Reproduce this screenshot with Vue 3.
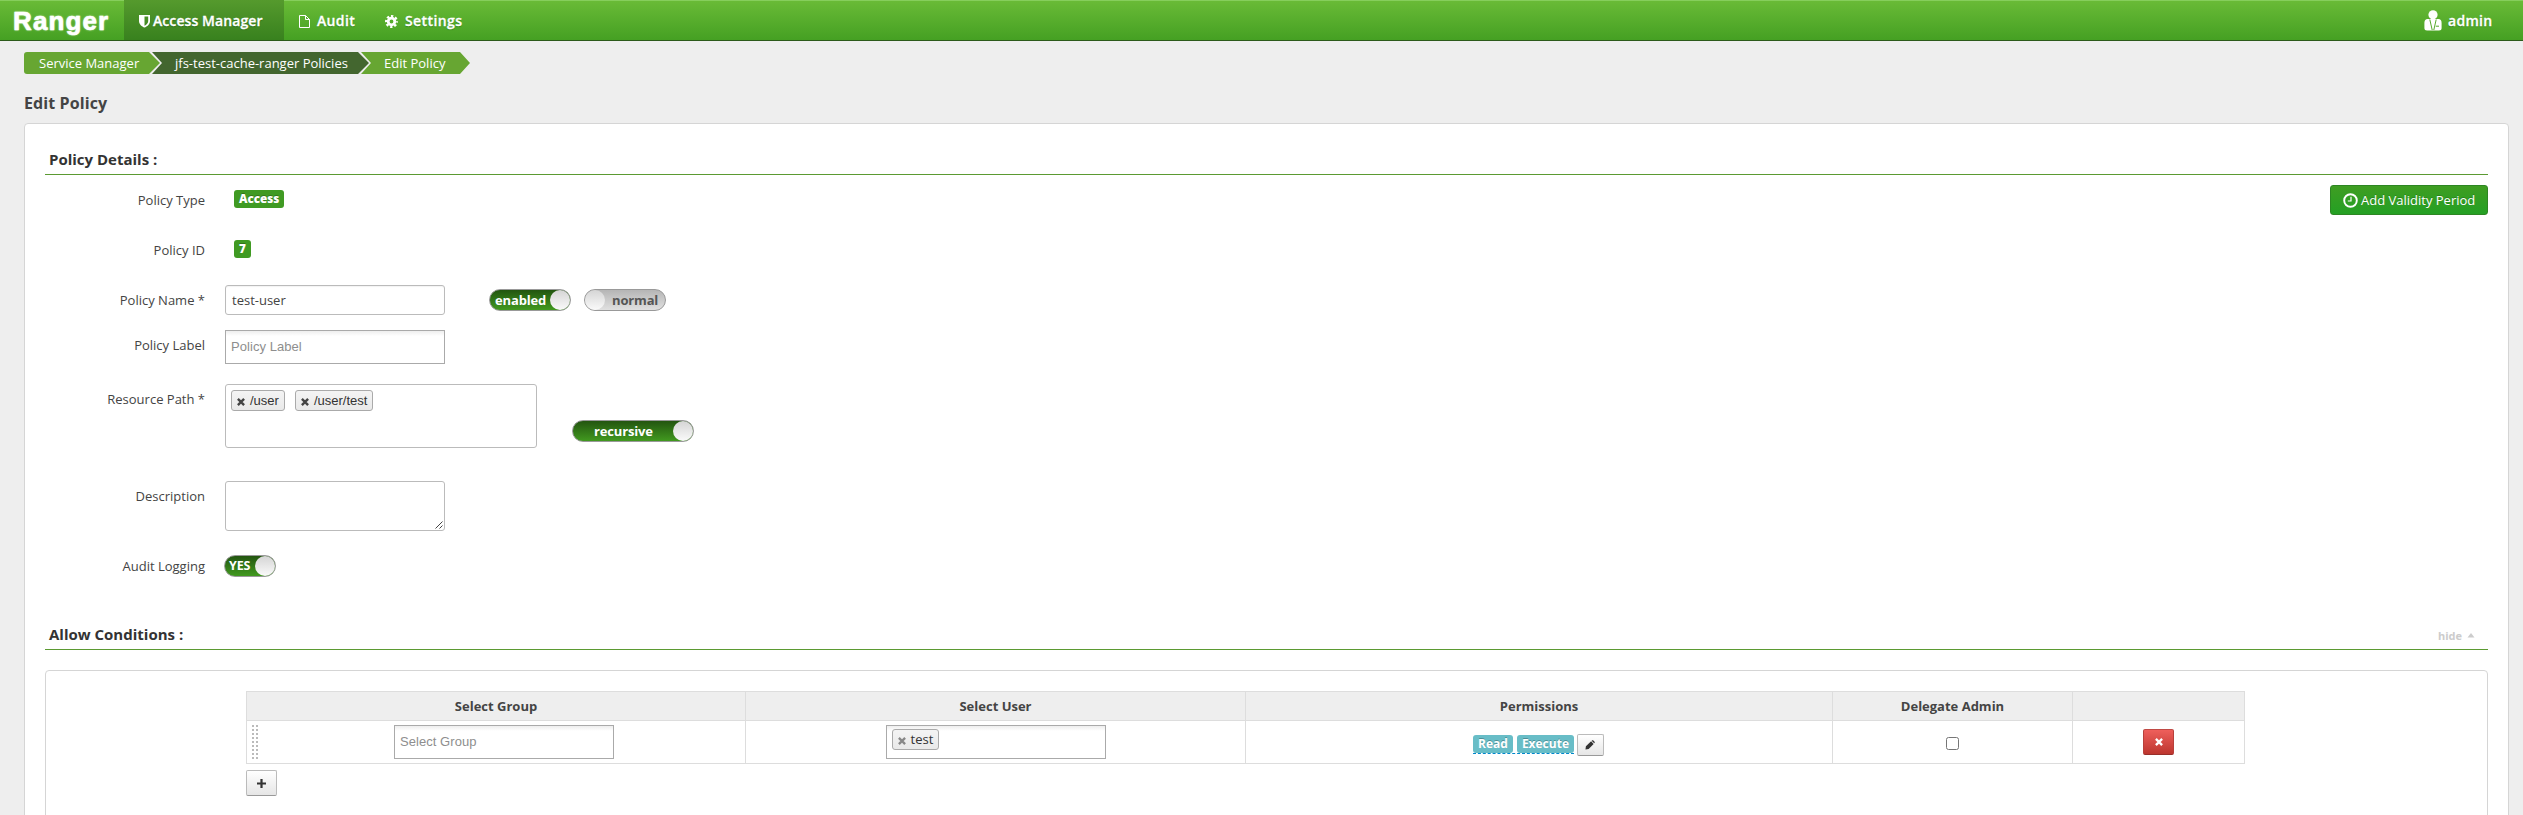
<script setup>
const nav = [
  { name: 'Access Manager', icon: 'shield', cls: 'access' },
  { name: 'Audit', icon: 'file', cls: 'audit' },
  { name: 'Settings', icon: 'cog', cls: 'settings' },
]
const permissions = ['Read', 'Execute']
const paths = ['/user', '/user/test']
</script>

<template>
  <div class="page">
    <header class="nav">
      <div class="logo">Ranger</div>
      <a v-for="n in nav" :key="n.name" class="tab" :class="n.cls">
        <svg v-if="n.icon === 'shield'" class="i-shield" viewBox="0 0 11 14"><path fill="#fff" fill-rule="evenodd" d="M0 1H11V7C11 10.5 8 12.5 5.5 13.6C3 12.5 0 10.5 0 7ZM5.5 2.6V11.8C7.5 10.7 9.2 9.3 9.2 7V2.600Z" /></svg>
        <svg v-else-if="n.icon === 'file'" class="i-file" viewBox="0 0 11 13"><path fill="none" stroke="#fff" d="M.5.5H6.500L10.500 4.500V12.500H.5ZM6.500.5V4.500H10.500" /></svg>
        <svg v-else class="i-cog" viewBox="0 0 13 13"><circle cx="6.500" cy="6.500" r="3.300" fill="none" stroke="#fff" stroke-width="2.800" /><circle cx="6.500" cy="6.500" r="5.300" fill="none" stroke="#fff" stroke-width="2.400" stroke-dasharray="2.300 1.862" stroke-dashoffset="1.150" /></svg>
        <span>{{ n.name }}</span>
      </a>
      <div class="user">
        <svg viewBox="0 0 18 21"><circle cx="9" cy="4.800" r="4.600" fill="#fff" /><path fill="#fff" d="M3 9H15Q17.600 9.500 17.600 13V18Q17.600 20.500 15 20.500H3Q.4 20.500.4 18V13Q.4 9.500 3 9Z" /><path fill="none" stroke="#55a92b" stroke-width="1" d="M5.800 9.500L8.200 20M12.200 9.500L9.800 20M11.800 16.200H15" /></svg>
        <span>admin</span>
      </div>
    </header>

    <nav class="crumbs">
      <a class="c1">Service Manager</a>
      <a class="c2">jfs-test-cache-ranger Policies</a>
      <a class="c3">Edit Policy</a>
    </nav>
    <h3 class="title">Edit Policy</h3>

    <main class="panel">
      <div class="legend first"><span>Policy Details :</span></div>
      <div class="details">
        <form class="form">
          <div class="row r-type"><label>Policy Type</label><span class="badge">Access</span></div>
          <div class="row r-id"><label>Policy ID</label><span class="badge">7</span></div>
          <div class="row r-name">
            <label>Policy Name *</label>
            <div class="input round">test-user</div>
            <div class="toggle on t-enabled"><span>enabled</span><i></i></div>
            <div class="toggle off t-normal"><i></i><span>normal</span></div>
          </div>
          <div class="row r-label"><label>Policy Label</label><div class="input square">Policy Label</div></div>
          <div class="row r-path">
            <label>Resource Path *</label>
            <div class="paths">
              <span v-for="p in paths" :key="p" class="chip">
                <svg viewBox="0 0 8 8"><path stroke="#444" stroke-width="2.400" d="M.9.9L7.100 7.100M7.100.9L.9 7.100" /></svg>{{ p }}
              </span>
            </div>
            <div class="toggle on t-rec"><span>recursive</span><i></i></div>
          </div>
          <div class="row r-desc">
            <label>Description</label>
            <div class="area"><svg viewBox="0 0 8 8"><path stroke="#444" stroke-width="1" d="M.5 7.500L7.500.5M4.500 7.500L7.500 4.500" /></svg></div>
          </div>
          <div class="row r-audit"><label>Audit Logging</label><div class="toggle on t-yes"><span>YES</span><i></i></div></div>
        </form>
        <button class="validity">
          <svg viewBox="0 0 15 15"><circle cx="7.500" cy="7.500" r="6.300" fill="none" stroke="#fff" stroke-width="1.900" /><path fill="none" stroke="#fff" stroke-width="1.200" d="M8 3.800V8H4.800" /></svg><span>Add Validity Period</span>
        </button>
      </div>

      <div class="legend second"><span>Allow Conditions :</span><a>hide<svg viewBox="0 0 8 5"><path fill="#ccc" d="M4 0L7.500 4.500H.5Z" /></svg></a></div>

      <section class="inner">
        <div class="grid">
          <div class="th">Select Group</div><div class="th">Select User</div><div class="th">Permissions</div><div class="th">Delegate Admin</div><div class="th"></div>
          <div class="td group"><i class="drag"></i><div class="input square">Select Group</div></div>
          <div class="td suser"><div class="input square"><span class="chip light"><svg viewBox="0 0 8 8"><path stroke="#888" stroke-width="2.300" d="M.9.9L7.100 7.100M7.100.9L.9 7.100" /></svg>test</span></div></div>
          <div class="td perms">
            <div class="plist"><span v-for="p in permissions" :key="p">{{ p }}</span></div>
            <button class="btn pencil"><svg viewBox="0 0 11 11"><path fill="#333" d="M.5 10.500L1 7L6.700 1.500L9.500 4.300L4 10ZM7.300.9L8 .4Q8.700 0 9.200.5L10.500 1.800Q11 2.300 10.600 2.900L10.100 3.700Z" /></svg></button>
          </div>
          <div class="td deleg"><i class="check"></i></div>
          <div class="td del"><button class="btn red"><svg viewBox="0 0 8 8"><path stroke="#fff" stroke-width="2.300" d="M.9.9L7.100 7.100M7.100.9L.9 7.100" /></svg></button></div>
        </div>
        <button class="btn plus"><svg viewBox="0 0 9 9"><path stroke="#333" stroke-width="2.200" d="M4.500 0V9M0 4.500H9" /></svg></button>
      </section>
    </main>
  </div>
</template>

<style>
body { margin: 0; background: #eee; overflow: hidden; }
</style>

<style scoped>
.page { width: 2523px; height: 815px; overflow: hidden; background: #eee; font: 13px/20px "Open Sans", sans-serif; color: #444; }
.page * { box-sizing: border-box; }
svg { display: block; flex: none; }
button { font: inherit; margin: 0; padding: 0; }

.nav { height: 41px; display: flex; border-bottom: 1px solid #2c5a1a; background: linear-gradient(#6abb37, #45a023); box-shadow: inset 0 1px #86ce5c; color: #fff; font-size: 14px; font-weight: 600; }
.logo { width: 124px; padding-left: 13px; font: bold 26px/42px "Liberation Sans", Arial, sans-serif; letter-spacing: 1.100px; -webkit-text-stroke: .5px #fff; text-shadow: 0 0 2px #e8ffe0; }
.tab { display: flex; align-items: center; height: 41px; padding-top: 1px; text-shadow: 0 1px 1px rgba(0, 60, 0, .35); -webkit-text-stroke: .3px #fff; }
.access { width: 160px; height: 40px; padding-left: 15px; background: linear-gradient(#559a2d, #38811e); }
.access span { letter-spacing: .08px; }
.audit { width: 86px; padding-left: 15px; }
.audit span { letter-spacing: .35px; }
.settings { padding-left: 15px; }
.settings span { letter-spacing: .4px; }
.i-shield { width: 11px; height: 14px; margin-right: 3px; }
.i-file { width: 11px; height: 13px; margin-right: 7px; }
.i-cog { width: 13px; height: 13px; margin-right: 7px; }
.user { margin-left: auto; width: 99px; display: flex; align-items: center; height: 41px; letter-spacing: .3px; text-shadow: 0 1px 1px rgba(0, 60, 0, .35); -webkit-text-stroke: .3px #fff; }
.user svg { width: 18px; height: 21px; margin-right: 6px; }

.crumbs { display: flex; margin: 11px 0 0 24px; height: 22px; color: #fff; line-height: 22px; }
.crumbs a { height: 22px; white-space: nowrap; }
.c1 { width: 136px; padding-left: 15px; background: #67a632; border-radius: 3px 0 0 3px; clip-path: polygon(0 0, 125px 0, 136px 11px, 125px 22px, 0 22px); }
.c2 { width: 217px; margin-left: -8px; padding-left: 23px; background: #43662f; clip-path: polygon(0 0, 206px 0, 217px 11px, 206px 22px, 0 22px, 10px 11px); }
.c3 { width: 109px; margin-left: -8px; padding-left: 23px; background: #67a632; clip-path: polygon(0 0, 99px 0, 109px 11px, 99px 22px, 0 22px, 10px 11px); }
.title { margin: 19px 0 0 24px; height: 30px; font-size: 16px; line-height: 20px; font-weight: 700; letter-spacing: .1px; }

.panel { margin: 0 14px 0 24px; height: 720px; background: #fff; border: 1px solid #d5d5d5; border-radius: 4px; padding: 24px 20px 0; }
.legend { display: flex; justify-content: space-between; border-bottom: 1px solid #5b9a32; height: 27px; padding-left: 4px; font-size: 15px; line-height: 22px; font-weight: 700; color: #333; }
.legend a { display: flex; align-items: center; margin-right: 13px; font-size: 11px; color: #ccc; font-weight: 700; height: 25px; }
.legend a svg { width: 8px; height: 5px; margin-left: 5px; }
.details { display: flex; justify-content: space-between; align-items: flex-start; height: 448px; }
.form { padding-top: 10px; }
.row { display: flex; align-items: flex-start; }
.row label { width: 160px; margin-right: 20px; text-align: right; flex: none; line-height: 20px; padding-top: 5px; }
.r-type, .r-id { height: 50px; }
.r-name { height: 45px; }
.r-label { height: 54px; }
.r-path { height: 97px; }
.r-desc { height: 69px; }
.r-audit label { padding-top: 6px; }
.badge { margin: 5px 0 0 9px; height: 18px; padding: 0 5px; border-radius: 3px; background: #409a23; color: #fff; font-size: 11.700px; line-height: 17px; font-weight: 800; text-shadow: 0 -1px rgba(0, 0, 0, .25); }
.input { width: 220px; background: #fff; }
.round { height: 30px; border: 1px solid #bbb; border-radius: 3px; padding-left: 6px; line-height: 28px; box-shadow: inset 0 1px 1px rgba(0, 0, 0, .05); }
.square { height: 34px; border: 1px solid #aaa; padding-left: 5px; line-height: 32px; color: #8e8e8e; letter-spacing: .05px; font-family: "Liberation Sans", Arial, sans-serif; background: linear-gradient(#eee, #fff 5px); }
.toggle { position: relative; height: 22px; border: 1px solid #999; border-radius: 11px; font-weight: 700; line-height: 20px; }
.toggle i { position: absolute; top: 0; width: 20px; height: 20px; border-radius: 50%; background: linear-gradient(#d5d5d5, #fafafa); }
.toggle span { display: block; letter-spacing: -.15px; }
.on { background: linear-gradient(#235510, #41991f); color: #fff; }
.on i { right: 0; }
.off { background: linear-gradient(#b5b5b5, #e0e0e0); color: #555; }
.off i { left: 0; }
.t-enabled { width: 82px; margin: 4px 0 0 44px; padding-left: 5px; }
.t-normal { width: 82px; margin: 4px 0 0 13px; padding-left: 27px; }
.t-rec { width: 122px; margin: 36px 0 0 35px; padding-left: 21px; }
.t-yes { width: 52px; margin: 5px 0 0 -1px; padding-left: 4px; font-size: 12.500px; }
.paths { width: 312px; height: 64px; border: 1px solid #bbb; border-radius: 3px; padding: 5px; display: flex; align-items: flex-start; gap: 10px; }
.chip { height: 21px; display: flex; align-items: center; border: 1px solid #aaa; border-radius: 3px; padding: 0 5px; background: linear-gradient(#f4f4f4, #e9e9e9); color: #333; font: 13px/19px "Liberation Sans", Arial, sans-serif; letter-spacing: 0; }
.chip svg { width: 8px; height: 8px; margin: 2px 5px 0 0; }
.area { width: 220px; height: 50px; border: 1px solid #bbb; border-radius: 3px; display: flex; justify-content: flex-end; align-items: flex-end; padding: 1px; }
.area svg { width: 8px; height: 8px; }
.validity { width: 158px; height: 30px; margin-top: 10px; display: flex; align-items: center; padding-left: 12px; background: linear-gradient(#3f9d22, #24a024); border: 1px solid #2d8623; border-radius: 3px; color: #fff; white-space: nowrap; text-shadow: 0 -1px rgba(0, 0, 0, .2); }
.validity svg { width: 15px; height: 15px; margin-right: 3px; }

.inner { margin-top: 20px; height: 200px; border: 1px solid #d5d5d5; border-radius: 4px; padding: 20px 0 0 200px; }
.grid { width: 1999px; height: 73px; display: grid; grid-template-columns: 499px 500px 587px 240px 173px; grid-template-rows: 29px 43px; border-top: 1px solid #ddd; }
.th, .td { border-left: 1px solid #ddd; border-bottom: 1px solid #ddd; display: flex; align-items: center; justify-content: center; }
.th:nth-child(5n), .td:nth-child(5n) { border-right: 1px solid #ddd; }
.th { background: #eee; font-size: 13px; font-weight: 700; color: #444; }
.group { justify-content: flex-start; align-items: flex-start; padding: 4px 0 0 5px; }
.drag { width: 6px; height: 34px; margin-right: 136px; background: repeating-linear-gradient(#fff0 0 2px, #fff 2px 4px), linear-gradient(90deg, #bbb 0 2px, #fff 2px 4px, #bbb 4px 6px); }
.suser { align-items: flex-start; padding-top: 4px; }
.suser .input { padding: 3px 0 0 5px; display: flex; align-items: flex-start; }
.light { font-family: "Open Sans", sans-serif; letter-spacing: 0; }
.light svg { margin-top: 3px; }
.perms { gap: 3px; align-items: flex-start; padding: 13px 1px 0 0; }
.plist { display: flex; gap: 4px; height: 20px; padding-top: 1px; border-bottom: 1px dashed #0088cc; }
.plist span { height: 18px; padding: 0 5px; border-radius: 3px; background: #68bdc7; color: #fff; font-size: 12px; line-height: 17px; font-weight: 700; text-shadow: 0 -1px rgba(0, 0, 0, .25); }
.btn { display: flex; align-items: center; justify-content: center; border: 1px solid #bbb; border-bottom-color: #999; border-radius: 2px; background: linear-gradient(#fff, #e6e6e6); }
.pencil { width: 27px; height: 22px; }
.pencil svg { width: 10px; height: 10px; }
.check { width: 13px; height: 13px; border: 1px solid #767676; border-radius: 2.500px; margin-top: 3px; background: #fff; }
.red { width: 31px; height: 26px; background: linear-gradient(#ee5f5b, #bd362f); border-color: #c04a45 #b8403b #982f2a; }
.red svg { width: 8px; height: 8px; }
.plus { width: 31px; height: 26px; margin-top: 6px; }
.plus svg { width: 9px; height: 9px; }
</style>
